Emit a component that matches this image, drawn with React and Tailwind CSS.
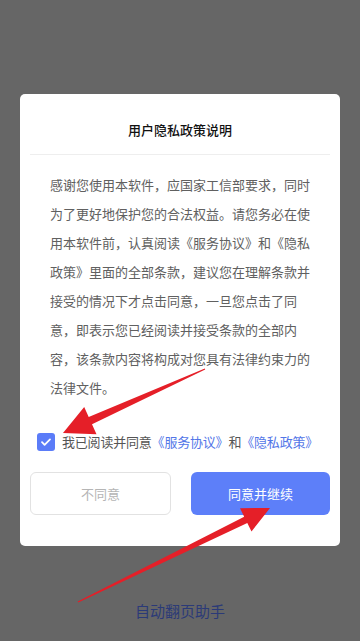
import React, { useState } from 'react';

// build an arrow polygon from tail to tip
const arrowPoints = (tail, tip, head, wing, shaft) => {
  const dx = tip[0] - tail[0];
  const dy = tip[1] - tail[1];
  const len = Math.hypot(dx, dy);
  const ux = dx / len;
  const uy = dy / len;
  const nx = -uy;
  const ny = ux;
  const bx = tip[0] - ux * head;
  const by = tip[1] - uy * head;
  const pts = [
    [tail[0] + nx * 0.6, tail[1] + ny * 0.6],
    [bx + nx * shaft, by + ny * shaft],
    [bx + nx * wing, by + ny * wing],
    tip,
    [bx - nx * wing, by - ny * wing],
    [bx - nx * shaft, by - ny * shaft],
    [tail[0] - nx * 0.6, tail[1] - ny * 0.6],
  ];
  return pts.map((p) => p.map((v) => v.toFixed(1)).join(',')).join(' ');
};

const App = () => {
  const [agreed, setAgreed] = useState(true);
  const font = { fontFamily: '"Noto Sans CJK SC", "Noto Sans", sans-serif' };

  return (
    <div
      className="relative w-[360px] h-[641px] bg-[#666666] px-5 pt-[94px] overflow-hidden"
      style={font}
    >
      <div className="bg-white rounded-[5px] h-[452px] flex flex-col">
        <h1 className="pt-[26px] text-[13px] leading-5 font-medium text-center text-[#111]">
          用户隐私政策说明
        </h1>
        <div className="mx-[10px] mt-[14px] border-t border-[#eeeeee]" />
        <p className="px-[30px] pt-[15px] text-[13px] leading-[29px] text-[#606060] break-all">
          感谢您使用本软件，应国家工信部要求，同时为了更好地保护您的合法权益。请您务必在使用本软件前，认真阅读《服务协议》和《隐私政策》里面的全部条款，建议您在理解条款并接受的情况下才点击同意，一旦您点击了同意，即表示您已经阅读并接受条款的全部内容，该条款内容将构成对您具有法律约束力的法律文件。
        </p>
        <div className="mt-[30px] flex items-center pl-[17px] h-5">
          <button
            onClick={() => setAgreed(!agreed)}
            className={`w-[18px] h-[18px] rounded-[3px] flex items-center justify-center ${agreed ? 'bg-[#5b7cf8]' : 'border border-[#ccc] bg-white'}`}
          >
            {agreed && (
              <svg width="12" height="12" viewBox="0 0 12 12" fill="none">
                <path d="M2 6.2l2.6 2.6L10 3.4" stroke="white" strokeWidth="1.8" strokeLinecap="round" strokeLinejoin="round" />
              </svg>
            )}
          </button>
          <span className="ml-[7px] text-[13px] leading-5 text-[#555555] whitespace-nowrap tracking-[-0.2px]">
            我已阅读并同意<span className="text-[#5276e8]">《服务协议》</span>和<span className="text-[#5276e8]">《隐私政策》</span>
          </span>
        </div>
        <div className="mt-[20px] px-[10px] flex gap-5">
          <button className="flex-1 h-[43px] rounded-md border border-[#e2e2e2] text-[13px] text-[#b5b5b5]">
            不同意
          </button>
          <button className="flex-1 h-[43px] rounded-md bg-[#5d7ff9] text-[13px] text-white">
            同意并继续
          </button>
        </div>
      </div>
      <p className="mt-[55px] text-center text-[15px] leading-5 text-[#2b3a78]">自动翻页助手</p>

      <svg className="absolute inset-0 pointer-events-none" width="360" height="641">
        <polygon points={arrowPoints([205, 369], [63, 433], 30, 15, 4)} fill="#e51f28" />
        <polygon points={arrowPoints([78, 602], [270, 508], 27, 13, 3.5)} fill="#e51f28" />
      </svg>
    </div>
  );
};

export default App;
